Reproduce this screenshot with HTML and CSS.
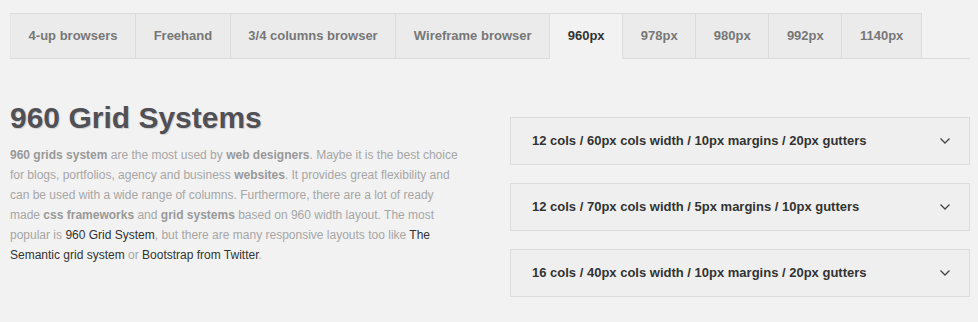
FILE: index.html
```html
<!DOCTYPE html>
<html lang="en">
<head>
    <meta charset="UTF-8">
    <meta name="viewport" content="width=device-width, initial-scale=1.0">
    <title>960 Grid Systems</title>
    <link rel="stylesheet" href="styles.css">
</head>
<body>
    <div class="page">
        <ul class="tabs">
            <li>4-up browsers</li>
            <li>Freehand</li>
            <li>3/4 columns browser</li>
            <li>Wireframe browser</li>
            <li class="active">960px</li>
            <li>978px</li>
            <li>980px</li>
            <li>992px</li>
            <li>1140px</li>
        </ul>

        <div class="content">
            <div class="intro">
                <h1>960 Grid Systems</h1>
                <p>
                    <strong>960 grids system</strong> are the most used by <strong>web designers</strong>. Maybe it is the best choice
                    for blogs, portfolios, agency and business <strong>websites</strong>. It provides great flexibility and
                    can be used with a wide range of columns. Furthermore, there are a lot of ready
                    made <strong>css frameworks</strong> and <strong>grid systems</strong> based on 960 width layout. The most
                    popular is <a href="#">960 Grid System</a>, but there are many responsive layouts too like <a href="#">The Semantic grid system</a> or <a href="#">Bootstrap from Twitter</a>.
                </p>
            </div>

            <div class="accordion">
                <div class="panel">
                    <span>12 cols / 60px cols width / 10px margins / 20px gutters</span>
                    <svg class="chevron" width="10" height="6" viewBox="0 0 10 6"><polyline points="0.5,0.5 5,5 9.5,0.5" fill="none" stroke="#444" stroke-width="1.3"/></svg>
                </div>
                <div class="panel">
                    <span>12 cols / 70px cols width / 5px margins / 10px gutters</span>
                    <svg class="chevron" width="10" height="6" viewBox="0 0 10 6"><polyline points="0.5,0.5 5,5 9.5,0.5" fill="none" stroke="#444" stroke-width="1.3"/></svg>
                </div>
                <div class="panel">
                    <span>16 cols / 40px cols width / 10px margins / 20px gutters</span>
                    <svg class="chevron" width="10" height="6" viewBox="0 0 10 6"><polyline points="0.5,0.5 5,5 9.5,0.5" fill="none" stroke="#444" stroke-width="1.3"/></svg>
                </div>
            </div>
        </div>
    </div>
</body>
</html>
```

FILE: styles.css
```css
body {
    margin: 0;
    background-color: #f2f2f2;
    font-family: "Liberation Sans", Arial, sans-serif;
    font-size: 13px;
}
.page {
    width: 960px;
    padding: 13px 0 0 10px;
}
.tabs {
    display: flex;
    list-style: none;
    margin: 0;
    padding: 0;
    border-bottom: 1px solid #dcdcdc;
}
.tabs li {
    background-color: #ebebeb;
    border-top: 1px solid #dcdcdc;
    border-right: 1px solid #dcdcdc;
    padding: 0 17.6px;
    height: 44px;
    line-height: 44px;
    font-weight: bold;
    color: #777;
    margin-bottom: -1px;
    border-bottom: 1px solid #dcdcdc;
}
.tabs li:first-child {
    border-left: 1px solid #e4e4e4;
}
.tabs li.active {
    background-color: #f2f2f2;
    color: #333;
    border-bottom-color: #f2f2f2;
}
.content {
    display: flex;
    gap: 40px;
    padding-top: 41px;
}
.intro {
    width: 460px;
}
h1 {
    margin: 0;
    font-size: 30px;
    line-height: 36px;
    color: #505056;
    text-shadow: 1px 1px 1px rgba(0, 0, 0, 0.15);
}
.intro p {
    max-width: 450px;
    margin: 9px 0 0;
    font-size: 12px;
    line-height: 20px;
    color: #a6a6a6;
}
.intro strong {
    color: #999;
}
.intro a {
    color: #333;
    text-decoration: none;
}
.accordion {
    width: 460px;
    padding-top: 17px;
}
.panel {
    display: flex;
    justify-content: space-between;
    align-items: center;
    background-color: #efefef;
    border: 1px solid #dcdcdc;
    padding: 16px 19px 16px 21px;
    line-height: 14px;
    font-weight: bold;
    color: #333;
    margin-bottom: 18px;
}
.chevron {
    display: block;
}
```
